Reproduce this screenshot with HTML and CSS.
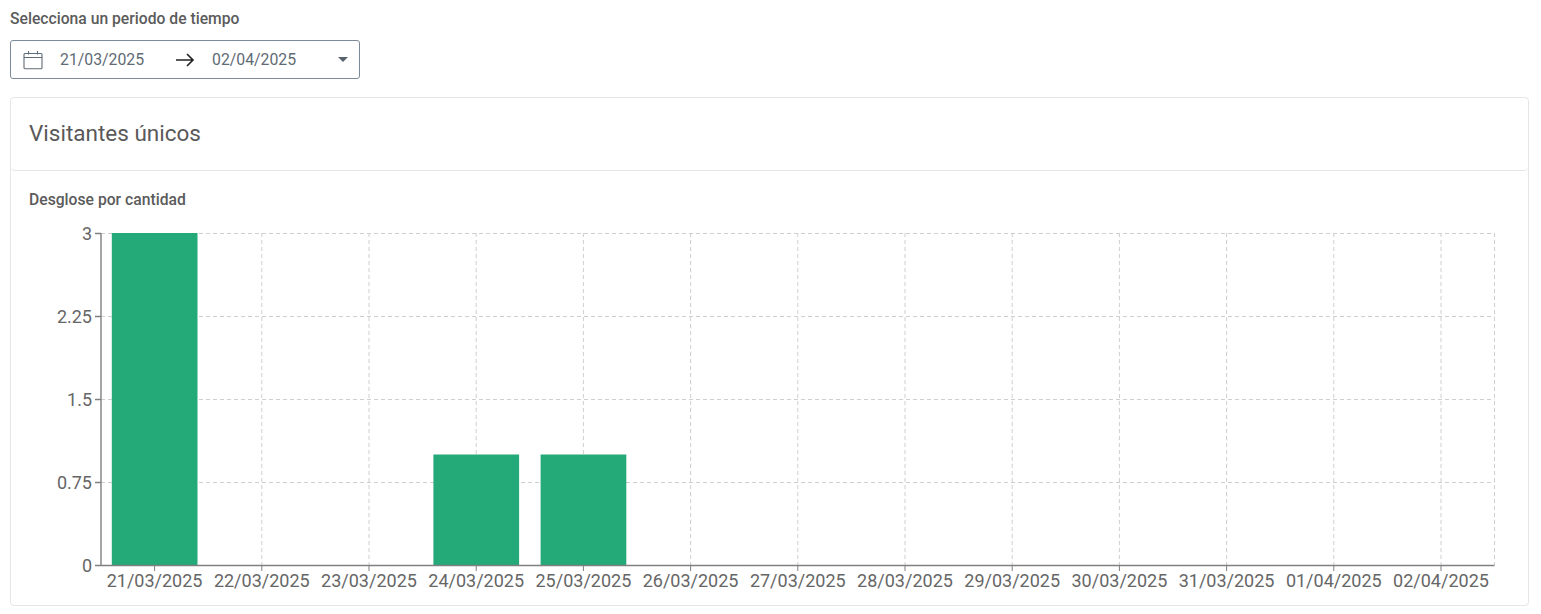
FILE: index.html
```html
<!DOCTYPE html>
<html lang="es">
<head>
<meta charset="utf-8">
<title>Visitantes únicos</title>
<link rel="stylesheet" href="styles.css">
</head>
<body>
<div class="period">
  <label class="period-label">Selecciona un periodo de tiempo</label>
  <div class="range">
    <svg class="cal" width="20" height="20" viewBox="0 0 20 20"><path d="M2 3.5h16a1 1 0 0 1 1 1v13.2a1 1 0 0 1-1 1H2a1 1 0 0 1-1-1V4.5a1 1 0 0 1 1-1zM1 7.5h18M5.5 1v3.5M14.5 1v3.5"/></svg>
    <span class="date date-from">21/03/2025</span>
    <svg class="arrow" width="20" height="14" viewBox="0 0 20 14"><path d="M1 7h17M12 1l6 6-6 6"/></svg>
    <span class="date date-to">02/04/2025</span>
    <span class="caret"></span>
  </div>
</div>
<section class="card">
  <header class="card-head"><h2>Visitantes únicos</h2></header>
  <div class="card-body">
    <h3>Desglose por cantidad</h3>
    <svg class="chart" width="1517" height="394" viewBox="11 212 1517 394">
      <g class="grid">
        <path d="M101 233.5H1494.5M101 316.5H1494.5M101 399.5H1494.5M101 482.5H1494.5"/>
        <path d="M261.8 233V565M369 233V565M476.2 233V565M583.4 233V565M690.6 233V565M797.8 233V565M905 233V565M1012.2 233V565M1119.4 233V565M1226.6 233V565M1333.8 233V565M1441 233V565M1494.5 233V565"/>
      </g>
      <g class="bars">
        <rect x="111.8" y="233" width="85.7" height="332"/>
        <rect x="433.4" y="454.5" width="85.7" height="110.5"/>
        <rect x="540.6" y="454.5" width="85.7" height="110.5"/>
      </g>
      <g class="axis">
        <path d="M101 233V566M95 233.5H101M95 316.5H101M95 399.5H101M95 482.5H101M95 565.5H1494.5"/>
        <path d="M154.6 566V571M261.8 566V571M369 566V571M476.2 566V571M583.4 566V571M690.6 566V571M797.8 566V571M905 566V571M1012.2 566V571M1119.4 566V571M1226.6 566V571M1333.8 566V571M1441 566V571"/>
      </g>
      <g class="ylabels">
        <text x="92" y="240">3</text>
        <text x="92" y="323">2.25</text>
        <text x="92" y="406">1.5</text>
        <text x="92" y="489">0.75</text>
        <text x="92" y="572">0</text>
      </g>
      <g class="xlabels">
        <text x="154.6" y="587">21/03/2025</text>
        <text x="261.8" y="587">22/03/2025</text>
        <text x="369" y="587">23/03/2025</text>
        <text x="476.2" y="587">24/03/2025</text>
        <text x="583.4" y="587">25/03/2025</text>
        <text x="690.6" y="587">26/03/2025</text>
        <text x="797.8" y="587">27/03/2025</text>
        <text x="905" y="587">28/03/2025</text>
        <text x="1012.2" y="587">29/03/2025</text>
        <text x="1119.4" y="587">30/03/2025</text>
        <text x="1226.6" y="587">31/03/2025</text>
        <text x="1333.8" y="587">01/04/2025</text>
        <text x="1441" y="587">02/04/2025</text>
      </g>
    </svg>
  </div>
</section>
</body>
</html>
```
FILE: styles.css
```css
* { box-sizing: border-box; }
html, body { height: 100%; }
body {
  margin: 0;
  padding: 10px 12px 0 10px;
  background: #fff;
  font-family: Roboto, "Liberation Sans", sans-serif;
  color: #5c5c5c;
  overflow: hidden;
}
.period { display: flex; flex-direction: column; }
.period-label {
  font-size: 15.7px;
  line-height: 17px;
  font-weight: 500;
  color: #5b5b5b;
  margin-bottom: 13px;
}
.range {
  width: 350px;
  height: 39px;
  border: 1px solid #7b8a96;
  border-radius: 3px;
  display: flex;
  align-items: center;
  padding-left: 12px;
}
.cal { fill: none; stroke: #5f6b75; stroke-width: 1.1; flex: none; }
.date { font-size: 15.8px; color: #5f6b75; line-height: 20px; width: 85px; }
.date-from { margin-left: 17px; }
.arrow { fill: none; stroke: #222; stroke-width: 1.6; margin-left: 30px; flex: none; }
.date-to { margin-left: 17px; }
.caret {
  margin-left: 41px;
  border-left: 5px solid transparent;
  border-right: 5px solid transparent;
  border-top: 5.5px solid #56626c;
}
.card {
  margin-top: 18px;
  height: 509px;
  border: 1px solid #e6e6e6;
  border-radius: 4px;
  background: #fff;
}
.card-head {
  height: 73px;
  border-bottom: 1px solid #e6e6e6;
  border-radius: 4px;
  padding: 22px 18px 0;
}
.card-head h2 {
  margin: 0;
  font-size: 22.5px;
  line-height: 27px;
  font-weight: 400;
  color: #595959;
}
.card-body { padding: 20px 0 0 0; }
.card-body h3 {
  margin: 0 0 0 18px;
  font-size: 15.7px;
  line-height: 17px;
  font-weight: 500;
  color: #5b5b5b;
}
.chart { display: block; margin-top: 4px; }
.grid path { fill: none; stroke: #cfcfcf; stroke-width: 1; stroke-dasharray: 4 3; }
.bars rect { fill: #24a978; }
.axis path { fill: none; stroke: #808080; stroke-width: 1; }
.axis path:first-child { stroke-width: 1.4; }
.ylabels text { font-size: 18px; fill: #666; text-anchor: end; font-family: Roboto, sans-serif; }
.xlabels text { font-size: 18px; fill: #666; text-anchor: middle; font-family: Roboto, sans-serif; }
```
